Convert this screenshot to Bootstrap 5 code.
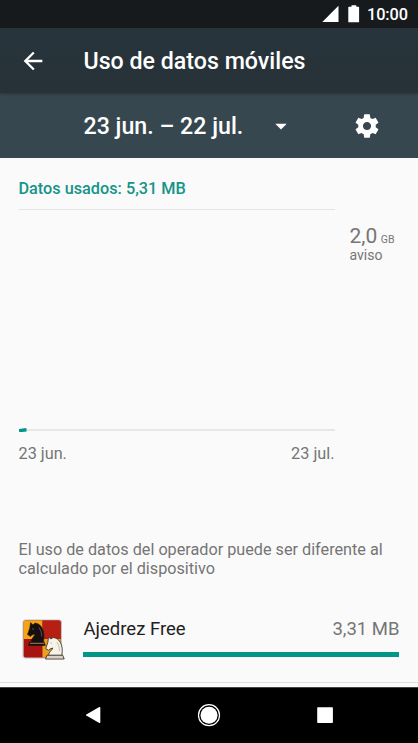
<!DOCTYPE html>
<html lang="es">
<head>
<meta charset="utf-8">
<meta name="viewport" content="width=device-width, initial-scale=1">
<title>Uso de datos móviles</title>
<link href="https://cdn.jsdelivr.net/npm/bootstrap@5.3.0/dist/css/bootstrap.min.css" rel="stylesheet">
<style>
  body { font-family: Roboto, "Liberation Sans", sans-serif; background: #fafafa; color: #757575; width: 418px; height: 743px; line-height: 1; }
  svg { display: block; flex: none; }
  .statusbar { height: 28px; background: linear-gradient(#15191c, #171b1e); padding-right: 10px; }
  .clock { font-size: 16.3px; font-weight: 500; margin-left: 7.3px; line-height: 28px; padding-top: 1px; letter-spacing: -.05px; }
  .appbar { height: 65px; background: linear-gradient(#28343b, #263238); padding-left: 18.5px; box-shadow: 0 1px 3px rgba(0,0,0,.3); z-index: 1; position: relative; }
  .title { font-size: 23.2px; font-weight: 500; margin: 3px 0 0 37px; white-space: nowrap; }
  .cyclebar { height: 65px; background: #37474f; padding: 0 37px 0 83.5px; }
  .cycle { font-size: 23.2px; font-weight: 500; width: 183px; white-space: nowrap; padding-top: 3px; }
  .usage { padding: 0 18.5px; }
  .used { font-size: 16.25px; font-weight: 500; color: #159488; height: 51px; padding-top: 23px; }
  .plot { width: 316px; height: 223px; border-top: 1px solid #e4e4e4; }
  .limit { padding: 17px 0 0 15px; white-space: nowrap; }
  .amount { font-size: 21px; line-height: 20px; }
  .unit { font-size: 10.5px; margin-left: 3.5px; line-height: 12px; }
  .word { font-size: 14px; line-height: 15px; margin-top: 2px; }
  .dates { width: 316px; font-size: 16.25px; padding-top: 14px; height: 108px; }
  .note { font-size: 16.22px; line-height: 19px; white-space: nowrap; height: 78px; }
  .approw { height: 64px; padding: 0 18.5px 0 20.5px; }
  .app { margin-left: 18px; }
  .appname { font-size: 18.5px; line-height: 22px; color: #212121; }
  .size { font-size: 18.5px; line-height: 22px; }
  .progress.usedbar { height: 5px; border-radius: 0; background: #e0e0e0; margin: 12px .5px 0 -.5px; }
  .usedbar .progress-bar { background: #009688; }
  .rowline { height: 5px; border-top: 1px solid #e0e0e0; }
  .navkeys { height: 56px; background: #000; border-top: 1px solid #444; }
</style>
<script src="https://cdn.jsdelivr.net/npm/bootstrap@5.3.0/dist/js/bootstrap.bundle.min.js"></script>
</head>
<body class="d-flex flex-column overflow-hidden m-0">
  <div class="statusbar flex-shrink-0 d-flex align-items-center justify-content-end text-white">
    <svg width="38" height="18" viewBox="0 0 38 18" fill="#fff"><path d="M0.300 17H16.500V.8z"/><path d="M26.500 1.700h3V.3h4.800v1.400h2.200q.6 0 .6.600v14.400q0 .6-.6.600h-9.600q-.6 0-.6-.6V2.300q0-.6.600-.6z"/></svg>
    <span class="clock">10:00</span>
  </div>
  <header class="appbar flex-shrink-0 d-flex align-items-center text-white">
    <svg width="28" height="28" viewBox="0 0 24 24" fill="#fff"><path d="M20 11H7.830l5.590-5.590L12 4l-8 8 8 8 1.410-1.410L7.830 13H20v-2z"/></svg>
    <h1 class="title">Uso de datos móviles</h1>
  </header>
  <div class="cyclebar flex-shrink-0 d-flex align-items-center text-white">
    <div class="cycle">23 jun. – 22 jul.</div>
    <svg width="28" height="28" viewBox="0 0 24 24" fill="#fff"><path d="M7.100 10l4.900 4.900 4.900-4.900z"/></svg>
    <svg class="ms-auto me-0" width="28" height="28" viewBox="0 0 24 24" fill="#fff"><path d="M19.430 12.980c.04-.32.070-.64.070-.98s-.03-.66-.07-.98l2.110-1.650c.19-.15.240-.42.120-.64l-2-3.460c-.12-.22-.39-.3-.61-.22l-2.490 1c-.52-.4-1.080-.73-1.690-.98l-.38-2.650C14.460 2.180 14.250 2 14 2h-4c-.25 0-.46.180-.49.420l-.38 2.650c-.61.250-1.170.590-1.690.980l-2.490-1c-.23-.09-.49 0-.61.220l-2 3.460c-.13.220-.07.490.120.640l2.110 1.650c-.04.320-.07.650-.07.980s.030.660.070.980l-2.110 1.650c-.19.150-.24.420-.12.640l2 3.460c.12.220.390.300.610.220l2.490-1c.52.400 1.080.730 1.690.980l.38 2.650c.03.240.240.420.490.420h4c.25 0 .46-.18.490-.42l.38-2.650c.61-.25 1.170-.59 1.690-.98l2.490 1c.23.090.490 0 .61-.22l2-3.460c.12-.22.070-.49-.12-.64l-2.110-1.650zM12 15.500c-1.930 0-3.500-1.570-3.500-3.500s1.570-3.500 3.500-3.500 3.500 1.570 3.500 3.500-1.570 3.500-3.500 3.500z"/></svg>
  </div>
  <main class="flex-grow-1 d-flex flex-column">
    <section class="usage">
      <div class="used">Datos usados: 5,31 MB</div>
      <div class="d-flex">
        <div class="plot d-flex align-items-end">
          <svg width="316" height="5" viewBox="0 0 316 5"><path d="M0 3H316" stroke="#e1e1e1" stroke-width="1.700"/><path d="M0 3.700L7.500 2.700" stroke="#009688" stroke-width="3.400"/></svg>
        </div>
        <div class="limit">
          <div class="d-flex align-items-baseline"><span class="amount">2,0</span><span class="unit">GB</span></div>
          <div class="word">aviso</div>
        </div>
      </div>
      <div class="dates d-flex justify-content-between"><span>23 jun.</span><span>23 jul.</span></div>
      <div class="note">El uso de datos del operador puede ser diferente al<br>calculado por el dispositivo</div>
    </section>
    <section class="approw d-flex">
      <svg width="45" height="44" viewBox="0 0 45 44">
        <rect x="1.500" y="1.500" width="39.500" height="39" rx="3" fill="#c4c2c0"/>
        <rect x="2.700" y="2.500" width="37" height="37" rx="2" fill="#a81510"/>
        <path d="M4.700 2.500H21.500V21H2.700V4.500q0-2 2-2z" fill="#f5a414"/>
        <path d="M21.500 21H39.700V39.500H21.500z" fill="#eda01a"/>
        <path d="M21.500 2.500H37.700q2 0 2 2V21H21.500z" fill="#b81f14"/>
        <path d="M10 24.500C10 20.500 13.500 18.500 14 16L11 17 9.500 18.500 6.500 16.500 8.800 10 9.500 4.600 12 6.800 14 5C20 5.500 24.500 12 22.500 24.500z" fill="#15100f" stroke="#2c1a14" stroke-width=".6"/>
        <path d="M11 10.800l2 .5M18 9.500q3 4 2.700 9" fill="none" stroke="#7b6e66" stroke-width=".7"/>
        <path d="M8.500 23.700h15l1.200 4H7z" fill="#17100e"/><path d="M9 25.300h14.500" stroke="#b98c6b" stroke-width=".9"/>
        <path d="M27.500 37.500C27.500 34 31 32.500 31.800 30L29 31 27.500 32.300 24.700 30.500 26.800 24.500 27.500 19 30 21 32 19.500C38.500 20 42.700 27 40.800 37.500z" fill="#f5f2ea" stroke="#45362d" stroke-width=".9"/>
        <path d="M29.500 25l1.500.4M36 24q2.800 4 2.500 9" fill="none" stroke="#b8b0a2" stroke-width=".8"/>
        <path d="M26 37.200h15.700l1.500 3.800H24.500z" fill="#f4eee1" stroke="#3a2c24" stroke-width=".9"/><path d="M26 39h16" stroke="#a09280" stroke-width=".6"/>
      </svg>
      <div class="app flex-grow-1">
        <div class="d-flex justify-content-between"><span class="appname">Ajedrez Free</span><span class="size">3,31 MB</span></div>
        <div class="progress usedbar"><div class="progress-bar" style="width:100%"></div></div>
      </div>
    </section>
    <div class="rowline"></div>
  </main>
  <nav class="navkeys flex-shrink-0">
    <svg width="418" height="55" viewBox="0 1 418 55" fill="#fff"><path d="M86.300 27.600L99.300 20q1-.4 1 .7v14.500q0 1.100-1 .7L86.300 28.600q-.8-.5 0-1z"/><circle cx="209" cy="28.200" r="8.500"/><circle cx="209" cy="28.200" r="10.500" fill="none" stroke="#fff" stroke-width="1.200"/><rect x="317.200" y="20.300" width="15.700" height="15.700" rx=".7"/></svg>
  </nav>
</body>
</html>
